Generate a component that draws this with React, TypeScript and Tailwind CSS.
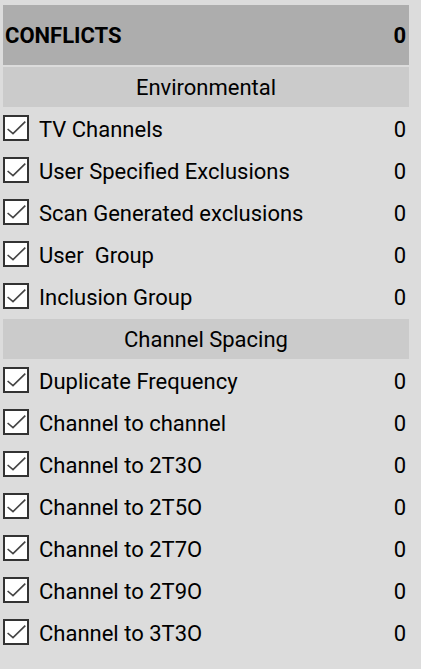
const environmental = [
  'TV Channels',
  'User Specified Exclusions',
  'Scan Generated exclusions',
  'User  Group',
  'Inclusion Group',
];

const spacing = [
  'Duplicate Frequency',
  'Channel to channel',
  'Channel to 2T3O',
  'Channel to 2T5O',
  'Channel to 2T7O',
  'Channel to 2T9O',
  'Channel to 3T3O',
];

const CheckBox = () => (
  <span className="box-border flex h-[26px] w-[26px] shrink-0 items-center justify-center border-2 border-[#333333] bg-white">
    <svg width="22" height="22" viewBox="0 0 22 22" className="block">
      <path d="M2.6 12 L8 16.6 L20.3 4.6" fill="none" stroke="#444444" strokeWidth="1.6" />
    </svg>
  </span>
);

const Row = ({ label }: { label: string }) => (
  <div className="flex h-[42px] items-center">
    <CheckBox />
    <span className="ml-[10px] whitespace-pre pt-[4px] text-[22px] leading-none text-black">{label}</span>
    <span className="ml-auto pr-[3px] pt-[4px] text-[22px] leading-none text-black">0</span>
  </div>
);

const Section = ({ title }: { title: string }) => (
  <div className="mt-[2px] flex h-[40px] items-center justify-center bg-[#cbcbcb] pt-[2px] text-[22px] leading-none text-black">
    {title}
  </div>
);

export default function App() {
  return (
    <div className="h-[669px] w-[421px] bg-[#dcdcdc] pt-[5px] pl-[3px] pr-[12px] font-['Roboto',sans-serif]">
      <div className="flex h-[60px] items-center justify-between bg-[#adadad] pl-[2px] pr-[3px] pt-[2px] text-[22px] font-bold leading-none text-black">
        <span>CONFLICTS</span>
        <span>0</span>
      </div>
      <Section title="Environmental" />
      {environmental.map((label) => (
        <Row key={label} label={label} />
      ))}
      <Section title="Channel Spacing" />
      {spacing.map((label) => (
        <Row key={label} label={label} />
      ))}
    </div>
  );
}
